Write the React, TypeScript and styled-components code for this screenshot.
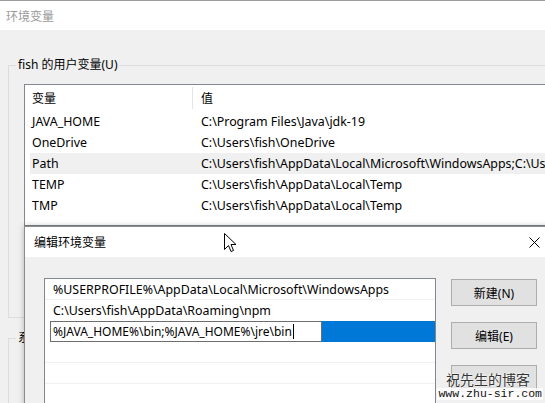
import React from "react";
import styled, { createGlobalStyle } from "styled-components";

const UI_FONT = `"Noto Sans", "Noto Sans CJK SC", sans-serif`;

const GlobalStyle = createGlobalStyle`
  html, body { margin: 0; padding: 0; background: #f0f0f0; overflow: hidden; }
  * { box-sizing: border-box; }
`;

const Screen = styled.div`
  position: relative;
  width: 545px;
  height: 403px;
  overflow: hidden;
  background: #f0f0f0;
  font-family: ${UI_FONT};
  font-size: 12.4px;
  color: #000;
`;

const OuterWindow = styled.div`
  display: flex;
  flex-direction: column;
  width: 640px;
  height: 403px;
  border-top: 1px solid #9c9c9c;
`;

const OuterTitle = styled.div`
  height: 29px;
  flex: none;
  display: flex;
  align-items: center;
  padding-left: 6px;
  background: #fff;
  color: #9a9a9a;
  font-size: 12px;
`;

const OuterBody = styled.div`
  display: flex;
  flex-direction: column;
  padding: 27px 0 0 8px;
  gap: 12px;
`;

const GroupBox = styled.fieldset<{ $h: number }>`
  margin: 0;
  width: 620px;
  height: ${(p) => p.$h}px;
  border: 1px solid #dcdcdc;
  padding: 11px 0 0 15px;
  min-inline-size: 0;
`;

const GroupLegend = styled.legend`
  padding: 0 2px;
  margin-left: -8px;
  line-height: 16px;
  font-size: 12px;
`;

const ListView = styled.div`
  width: 600px;
  height: 142px;
  border: 1px solid #828790;
  background: #fff;
  display: flex;
  flex-direction: column;
`;

const ListHeader = styled.div`
  height: 26px;
  display: grid;
  grid-template-columns: 163px 1fr;
  padding-left: 5px;
  align-items: center;
`;

const HeaderCell = styled.div<{ $sep?: boolean }>`
  height: 22px;
  display: flex;
  align-items: center;
  font-size: 12px;
  padding-left: ${(p) => (p.$sep ? 2 : 8)}px;
  border-right: ${(p) => (p.$sep ? "1px solid #e5e5e5" : "none")};
`;

const ListRows = styled.div`
  display: flex;
  flex-direction: column;
  padding-left: 5px;
`;

const Row = styled.div<{ $selected?: boolean }>`
  height: 21px;
  display: grid;
  grid-template-columns: 163px 1fr;
  align-items: center;
  background: ${(p) => (p.$selected ? "#f0f0f0" : "transparent")};
  white-space: nowrap;
`;

const NameCell = styled.div`
  padding-left: 2px;
`;

const ValueCell = styled.div`
  padding-left: 8px;
  overflow: hidden;
`;

const Dialog = styled.div`
  position: absolute;
  left: 24px;
  top: 226px;
  width: 534px;
  height: 200px;
  border: 1px solid #8a8a8a;
  box-shadow: 0 0 6px rgba(0, 0, 0, 0.25);
  background: #f0f0f0;
  display: flex;
  flex-direction: column;
`;

const DialogTitle = styled.div`
  height: 30px;
  flex: none;
  display: flex;
  align-items: center;
  justify-content: space-between;
  padding-left: 9px;
  background: #fff;
  font-size: 12px;
`;

const CloseButton = styled.div`
  width: 46px;
  height: 30px;
  display: flex;
  align-items: center;
  justify-content: center;
`;

const DialogBody = styled.div`
  display: flex;
  align-items: flex-start;
  padding: 21px 0 0 19px;
  gap: 15px;
`;

const EditList = styled.div`
  width: 392px;
  height: 140px;
  border: 1px solid #828790;
  background: #fff;
  display: flex;
  flex-direction: column;
`;

const EditRow = styled.div<{ $line?: boolean }>`
  height: 21px;
  flex: none;
  display: flex;
  align-items: center;
  padding-left: 8px;
  border-bottom: 1px solid ${(p) => (p.$line ? "#f0f0f0" : "transparent")};
  white-space: nowrap;
`;

const EditingRow = styled.div`
  height: 21px;
  flex: none;
  display: flex;
  padding-left: 5px;
`;

const EditBox = styled.div`
  width: 272px;
  height: 21px;
  border: 1px solid #6e6e6e;
  background: #fff;
  display: flex;
  align-items: center;
  padding-left: 2px;
  font-size: 12px;
  white-space: nowrap;
  overflow: hidden;
`;

const Caret = styled.span`
  display: inline-block;
  width: 1px;
  height: 15px;
  margin-left: 1px;
  background: #000;
`;

const SelectionFill = styled.div`
  flex: 1;
  background: #0078d7;
`;

const ButtonColumn = styled.div`
  display: flex;
  flex-direction: column;
  gap: 16px;
  padding-top: 1px;
`;

const DlgButton = styled.div`
  width: 86px;
  height: 27px;
  border: 1px solid #adadad;
  background: #e1e1e1;
  display: flex;
  align-items: center;
  justify-content: center;
  font-size: 12px;
`;

const Cursor = styled.svg`
  position: absolute;
  left: 224px;
  top: 233px;
`;

const Watermark = styled.div`
  position: absolute;
  right: 2px;
  bottom: 3px;
  display: flex;
  flex-direction: column;
  align-items: flex-end;
`;

const WatermarkTitle = styled.div`
  font-family: "Noto Sans CJK SC", sans-serif;
  font-weight: 400;
  font-size: 14px;
  line-height: 17px;
  color: #333;
  margin-right: 13px;
  text-shadow: 0 0 2px #fff, 0 0 2px #fff;
`;

const WatermarkUrl = styled.div`
  font-family: "Liberation Mono", monospace;
  font-size: 11.5px;
  line-height: 12px;
  color: #111;
  background: rgba(255, 255, 255, 0.85);
  padding: 0 1px;
`;

const vars = [
  ["JAVA_HOME", "C:\\Program Files\\Java\\jdk-19"],
  ["OneDrive", "C:\\Users\\fish\\OneDrive"],
  ["Path", "C:\\Users\\fish\\AppData\\Local\\Microsoft\\WindowsApps;C:\\Users\\fish\\AppData\\Roaming\\npm"],
  ["TEMP", "C:\\Users\\fish\\AppData\\Local\\Temp"],
  ["TMP", "C:\\Users\\fish\\AppData\\Local\\Temp"],
];

export default function App() {
  return (
    <>
      <GlobalStyle />
      <Screen>
        <OuterWindow>
          <OuterTitle>环境变量</OuterTitle>
          <OuterBody>
            <GroupBox $h={261}>
              <GroupLegend>fish 的用户变量(U)</GroupLegend>
              <ListView>
                <ListHeader>
                  <HeaderCell $sep>变量</HeaderCell>
                  <HeaderCell>值</HeaderCell>
                </ListHeader>
                <ListRows>
                  {vars.map(([n, v]) => (
                    <Row key={n} $selected={n === "Path"}>
                      <NameCell>{n}</NameCell>
                      <ValueCell>{v}</ValueCell>
                    </Row>
                  ))}
                </ListRows>
              </ListView>
            </GroupBox>
            <GroupBox $h={120}>
              <GroupLegend>系统变量(S)</GroupLegend>
            </GroupBox>
          </OuterBody>
        </OuterWindow>

        <Dialog>
          <DialogTitle>
            编辑环境变量
            <CloseButton>
              <svg width="11" height="11" viewBox="0 0 11 11">
                <path d="M0.5 0.5 L10.5 10.5 M10.5 0.5 L0.5 10.5" stroke="#000" strokeWidth="1" fill="none" />
              </svg>
            </CloseButton>
          </DialogTitle>
          <DialogBody>
            <EditList>
              <EditRow $line>%USERPROFILE%\AppData\Local\Microsoft\WindowsApps</EditRow>
              <EditRow>C:\Users\fish\AppData\Roaming\npm</EditRow>
              <EditingRow>
                <EditBox>
                  %JAVA_HOME%\bin;%JAVA_HOME%\jre\bin
                  <Caret />
                </EditBox>
                <SelectionFill />
              </EditingRow>
              <EditRow $line />
              <EditRow $line />
              <EditRow $line />
            </EditList>
            <ButtonColumn>
              <DlgButton>新建(N)</DlgButton>
              <DlgButton>编辑(E)</DlgButton>
              <DlgButton />
            </ButtonColumn>
          </DialogBody>
        </Dialog>

        <Cursor width="13" height="21" viewBox="0 0 13 21">
          <path
            d="M0.5 0.5 L0.5 16.5 L4.5 12.5 L7 18.5 L9.5 17.5 L7 11.5 L12 11.5 Z"
            fill="#fff"
            stroke="#000"
            strokeWidth="1"
            strokeLinejoin="miter"
          />
        </Cursor>

        <Watermark>
          <WatermarkTitle>祝先生的博客</WatermarkTitle>
          <WatermarkUrl>www.zhu-sir.com</WatermarkUrl>
        </Watermark>
      </Screen>
    </>
  );
}
